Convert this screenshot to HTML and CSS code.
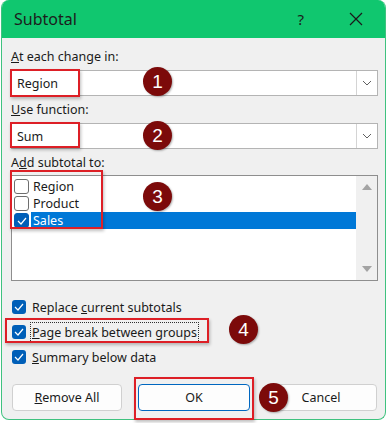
FILE: index.html
```html
<!DOCTYPE html>
<html>
<head>
<meta charset="utf-8">
<link rel="stylesheet" href="styles.css">
</head>
<body>
<div class="dialog">
  <div class="titlebar">
    <span class="title">Subtotal</span>
    <span class="help">?</span>
    <svg class="close" width="14" height="14" viewBox="0 0 14 14"><path d="M1 1L13 13M13 1L1 13" stroke="#1a1a1a" stroke-width="1.2"/></svg>
  </div>
  <div class="content">
    <div class="label"><u>A</u>t each change in:</div>
    <div class="combo"><span class="combo-text">Region</span><span class="combo-btn"><svg width="10" height="6" viewBox="0 0 10 6"><path d="M1 1L5 5L9 1" fill="none" stroke="#606060" stroke-width="1"/></svg></span></div>
    <div class="label"><u>U</u>se function:</div>
    <div class="combo"><span class="combo-text">Sum</span><span class="combo-btn"><svg width="10" height="6" viewBox="0 0 10 6"><path d="M1 1L5 5L9 1" fill="none" stroke="#606060" stroke-width="1"/></svg></span></div>
    <div class="label">A<u>d</u>d subtotal to:</div>
    <div class="listbox">
      <div class="list-items">
        <div class="item"><span class="lcheck"></span><span class="itext">Region</span></div>
        <div class="item"><span class="lcheck"></span><span class="itext">Product</span></div>
        <div class="item selected"><span class="lcheck on"><svg width="10" height="8" viewBox="0 0 10 8"><path d="M1 4L4 7L9 1" fill="none" stroke="#fff" stroke-width="1.2"/></svg></span><span class="itext">Sales</span></div>
      </div>
      <div class="scrollbar">
        <span class="arrow up"></span>
        <span class="arrow down"></span>
      </div>
    </div>
    <div class="checks">
      <div class="crow"><span class="cbox"><svg width="10" height="8" viewBox="0 0 10 8"><path d="M1 4L4 7L9 1" fill="none" stroke="#fff" stroke-width="1.2"/></svg></span><span>Replace <u>c</u>urrent subtotals</span></div>
      <div class="crow"><span class="cbox"><svg width="10" height="8" viewBox="0 0 10 8"><path d="M1 4L4 7L9 1" fill="none" stroke="#fff" stroke-width="1.2"/></svg></span><span class="focus"><u>P</u>age break between groups</span></div>
      <div class="crow"><span class="cbox"><svg width="10" height="8" viewBox="0 0 10 8"><path d="M1 4L4 7L9 1" fill="none" stroke="#fff" stroke-width="1.2"/></svg></span><span><u>S</u>ummary below data</span></div>
    </div>
    <div class="buttons">
      <div class="btn remove"><u>R</u>emove All</div>
      <div class="btn ok">OK</div>
      <div class="btn cancel">Cancel</div>
    </div>
  </div>
</div>

<div class="mark box1"></div>
<div class="mark box2"></div>
<div class="mark box3"></div>
<div class="mark box4"></div>
<div class="mark box5"></div>
<div class="num n1">1</div>
<div class="num n2">2</div>
<div class="num n3">3</div>
<div class="num n4">4</div>
<div class="num n5">5</div>
</body>
</html>
```

FILE: styles.css
```css
html, body {
  margin: 0;
  padding: 0;
  background: #ffffff;
}
body {
  position: relative;
  width: 389px;
  height: 423px;
  overflow: hidden;
  font-family: "Noto Sans", "Open Sans", sans-serif;
  font-size: 12.5px;
  color: #1a1a1a;
}
.dialog {
  margin-left: 1px;
  width: 383px;
  height: 419px;
  border: 1px solid #3fc27f;
  border-top: none;
  border-radius: 8px;
  overflow: hidden;
  background: #f0f0f0;
  display: flex;
  flex-direction: column;
}
.titlebar {
  height: 38px;
  background: #10c76f;
  display: flex;
  align-items: center;
  flex-shrink: 0;
}
.title {
  font-size: 16px;
  margin-left: 12px;
  flex: 1;
  color: #1c1c1c;
}
.help {
  font-size: 15px;
  margin-right: 45px;
  color: #1c1c1c;
}
.close {
  margin-right: 22px;
}
.content {
  padding: 11px 7px 0 9px;
  display: flex;
  flex-direction: column;
}
.label {
  height: 16px;
  line-height: 16px;
  margin-bottom: 5px;
}
.combo {
  height: 24px;
  border: 1px solid #b4b4b4;
  background: #ffffff;
  display: flex;
  align-items: center;
  margin-bottom: 6px;
}
.combo-text {
  flex: 1;
  padding-left: 5px;
}
.combo-btn {
  width: 20px;
  height: 24px;
  border-left: 1px solid #d4d4d4;
  display: flex;
  align-items: center;
  justify-content: center;
}
.listbox {
  margin-top: -1px;
  height: 104px;
  border: 1px solid #8e8e8e;
  background: #ffffff;
  display: flex;
}
.list-items {
  flex: 1;
  padding-top: 2px;
}
.item {
  height: 17px;
  display: flex;
  align-items: center;
  padding-left: 2px;
}
.lcheck {
  width: 15px;
  height: 15px;
  border: 1px solid #6e6e6e;
  border-radius: 3px;
  background: #ffffff;
  box-sizing: border-box;
  display: flex;
  align-items: center;
  justify-content: center;
  margin-right: 2px;
}
.lcheck.on {
  background: #005fb8;
  border-color: #005fb8;
}
.itext {
  flex: 1;
  height: 17px;
  line-height: 17px;
  padding-left: 2px;
}
.selected .itext {
  background: #0078d7;
  color: #ffffff;
}
.scrollbar {
  width: 21px;
  background: #f0f0f0;
  display: flex;
  flex-direction: column;
  justify-content: space-between;
  align-items: center;
  padding: 8px 0 8px;
}
.arrow {
  width: 0;
  height: 0;
  border-left: 5px solid transparent;
  border-right: 5px solid transparent;
}
.arrow.up {
  border-bottom: 6px solid #a3a3a3;
}
.arrow.down {
  border-top: 6px solid #a3a3a3;
}
.checks {
  margin-top: 16px;
  display: flex;
  flex-direction: column;
  gap: 5px;
}
.crow {
  height: 20px;
  display: flex;
  align-items: center;
}
.cbox {
  width: 14px;
  height: 14px;
  border-radius: 3px;
  background: #005fb8;
  display: flex;
  align-items: center;
  justify-content: center;
  margin-left: 1px;
  margin-right: 6px;
}
.focus {
  outline: 1px dotted #303030;
  outline-offset: 1px;
}
.buttons {
  margin-top: 17px;
  display: flex;
  padding-left: 1px;
}
.btn {
  height: 25px;
  border: 1px solid #d0d0d0;
  border-radius: 4px;
  background: #fdfdfd;
  display: flex;
  align-items: center;
  justify-content: center;
}
.remove {
  width: 108px;
}
.ok {
  width: 110px;
  margin-left: 16px;
  border-color: #0067c0;
}
.cancel {
  width: 110px;
  margin-left: 15px;
}
.mark {
  position: absolute;
  border: 2px solid #dd1f26;
  box-sizing: border-box;
  box-shadow: 1px 2px 3px rgba(0,0,0,0.25);
}
.box1 { left: 10px; top: 69px; width: 70px; height: 28px; }
.box2 { left: 10px; top: 122px; width: 70px; height: 26px; }
.box3 { left: 10px; top: 170px; width: 93px; height: 59px; }
.box4 { left: 5px; top: 318px; width: 204px; height: 25px; }
.box5 { left: 134px; top: 377px; width: 120px; height: 43px; }
.num {
  position: absolute;
  width: 29px;
  height: 29px;
  border-radius: 50%;
  background: #7c0a0a;
  color: #ffffff;
  font-family: "Liberation Sans", Arial, sans-serif;
  font-size: 19px;
  line-height: 29px;
  text-align: center;
  box-shadow: 1px 1px 2px rgba(0,0,0,0.3);
}
.n1 { left: 143px; top: 67px; }
.n2 { left: 143px; top: 121px; }
.n3 { left: 143px; top: 182px; }
.n4 { left: 229px; top: 315px; }
.n5 { left: 259px; top: 383px; }
```
